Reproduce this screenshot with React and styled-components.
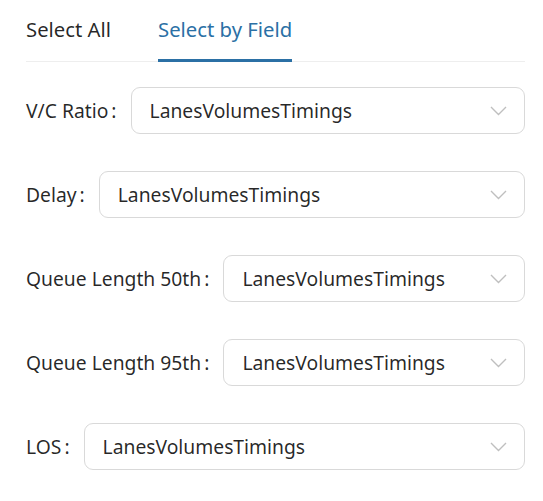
import React, { useState } from "react";
import styled, { createGlobalStyle } from "styled-components";

const GlobalStyle = createGlobalStyle`
  body {
    margin: 0;
    background: #ffffff;
    font-family: "Noto Sans", "Open Sans", sans-serif;
    color: rgba(0, 0, 0, 0.85);
  }
`;

const Wrapper = styled.section`
  padding: 0 18px 0 26px;
  width: 499px;
`;

const TabBar = styled.div`
  display: flex;
  gap: 47px;
  height: 62px;
  border-bottom: 1px solid #eeeeee;
  box-sizing: border-box;
`;

const Tab = styled.button`
  position: relative;
  display: flex;
  align-items: center;
  padding: 0 0 3px;
  border: none;
  background: none;
  font-family: inherit;
  font-size: 20.3px;
  cursor: pointer;
  color: ${(p) => (p.$active ? "#2b70a5" : "rgba(0, 0, 0, 0.85)")};

  &::after {
    content: "";
    position: absolute;
    left: 0;
    right: 0;
    bottom: -1px;
    height: 3px;
    background: ${(p) => (p.$active ? "#2b70a5" : "transparent")};
  }
`;

const Form = styled.div`
  display: flex;
  flex-direction: column;
  gap: 37px;
  padding-top: 25px;
`;

const Row = styled.div`
  display: flex;
  align-items: center;
`;

const Label = styled.label`
  font-size: 19.3px;
  white-space: nowrap;
  margin-right: 14px;
  color: rgba(0, 0, 0, 0.85);
`;

const Colon = styled.span`
  margin-left: 3px;
`;

const Select = styled.div`
  flex: 1;
  display: flex;
  align-items: center;
  justify-content: space-between;
  height: 47px;
  box-sizing: border-box;
  padding: 0 17px 0 18px;
  border: 1px solid #d9d9d9;
  border-radius: 9px;
  font-size: 19.3px;
  color: rgba(0, 0, 0, 0.85);
  cursor: pointer;
`;

const Chevron = () => (
  <svg width="17" height="10" viewBox="0 0 17 10" fill="none">
    <path d="M1 1 L8.5 8.5 L16 1" stroke="#bfbfbf" strokeWidth="1.4" />
  </svg>
);

const fields = [
  "V/C Ratio",
  "Delay",
  "Queue Length 50th",
  "Queue Length 95th",
  "LOS",
];

const App = () => {
  const [tab, setTab] = useState("field");

  return (
    <Wrapper>
      <GlobalStyle />
      <TabBar>
        <Tab $active={tab === "all"} onClick={() => setTab("all")}>
          Select All
        </Tab>
        <Tab $active={tab === "field"} onClick={() => setTab("field")}>
          Select by Field
        </Tab>
      </TabBar>
      <Form>
        {fields.map((name) => (
          <Row key={name}>
            <Label>
              {name}
              <Colon>:</Colon>
            </Label>
            <Select>
              <span>LanesVolumesTimings</span>
              <Chevron />
            </Select>
          </Row>
        ))}
      </Form>
    </Wrapper>
  );
};

export default App;
